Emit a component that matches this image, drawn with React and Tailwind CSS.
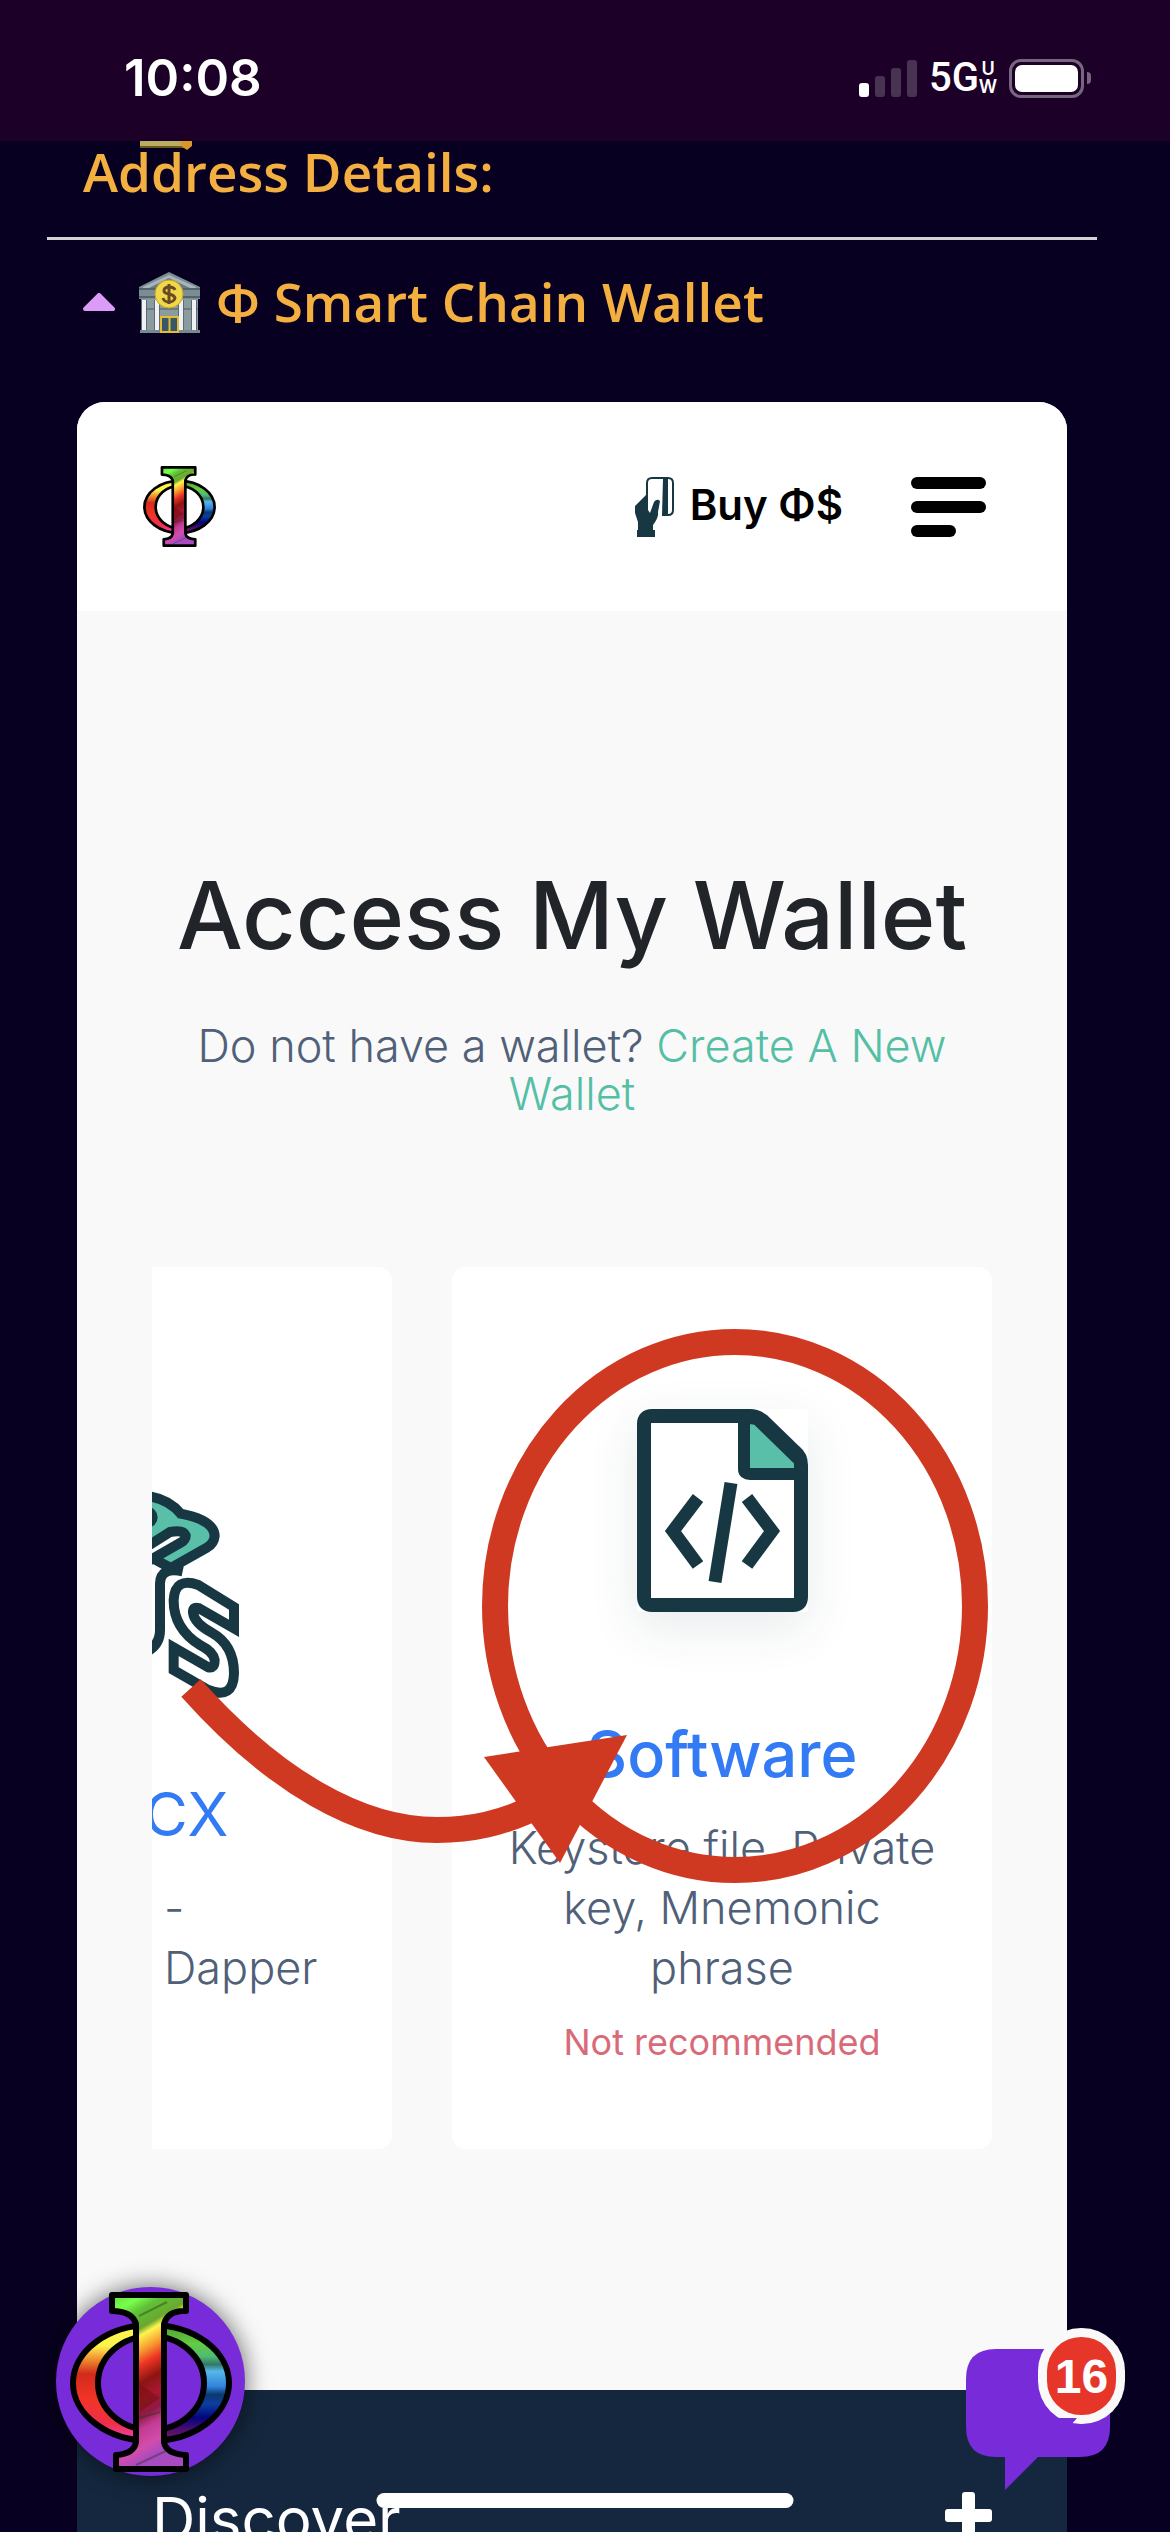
import React from "react";

const PhiLogo = ({ id, className }) => (
  <svg viewBox="0 0 162 180" className={className} role="img" aria-label="Phi logo">
    <defs>
      <linearGradient id={id + "stem"} x1="0" y1="0" x2="0.25" y2="1">
        <stop offset="0" stopColor="#63dd3d" />
        <stop offset="0.1" stopColor="#78ff4c" />
        <stop offset="0.17" stopColor="#60c038" />
        <stop offset="0.27" stopColor="#6aa82f" />
        <stop offset="0.31" stopColor="#fff44f" />
        <stop offset="0.4" stopColor="#f6932f" />
        <stop offset="0.47" stopColor="#ee3524" />
        <stop offset="0.57" stopColor="#8d1412" />
        <stop offset="0.66" stopColor="#a81830" />
        <stop offset="0.75" stopColor="#8e1a45" />
        <stop offset="0.82" stopColor="#c23a92" />
        <stop offset="0.92" stopColor="#d24dab" />
        <stop offset="1" stopColor="#a84ac0" />
      </linearGradient>
      <linearGradient id={id + "left"} x1="0.6" y1="0" x2="0.6" y2="1">
        <stop offset="0" stopColor="#fff352" />
        <stop offset="0.18" stopColor="#fdf34d" />
        <stop offset="0.28" stopColor="#f29a33" />
        <stop offset="0.42" stopColor="#d22b1c" />
        <stop offset="0.65" stopColor="#f23428" />
        <stop offset="0.85" stopColor="#ee2f48" />
        <stop offset="1" stopColor="#ee45b5" />
      </linearGradient>
      <linearGradient id={id + "right"} x1="0.4" y1="0" x2="0.4" y2="1">
        <stop offset="0" stopColor="#4f9f30" />
        <stop offset="0.16" stopColor="#62cc43" />
        <stop offset="0.27" stopColor="#4fbb72" />
        <stop offset="0.34" stopColor="#33776a" />
        <stop offset="0.4" stopColor="#55b8e8" />
        <stop offset="0.53" stopColor="#3182dc" />
        <stop offset="0.6" stopColor="#0b3870" />
        <stop offset="0.68" stopColor="#0b3fa0" />
        <stop offset="0.8" stopColor="#04047c" />
        <stop offset="0.9" stopColor="#4b0c70" />
        <stop offset="1" stopColor="#7d1b62" />
      </linearGradient>
    </defs>
    <path d="M81 33A78 58 0 0 0 81 149V138A53 47 0 0 1 81 44z" fill={`url(#${id}left)`} stroke="#000" strokeWidth="6" />
    <path d="M81 33A78 58 0 0 1 81 149V138A53 47 0 0 0 81 44z" fill={`url(#${id}right)`} stroke="#000" strokeWidth="6" />
    <path
      d="M42 3H116V19Q98 18 94 32V45V142V150Q96 162 116 163V177H46V163Q64 162 66 150V32Q62 19 42 19Z"
      fill={`url(#${id}stem)`}
      stroke="#000"
      strokeWidth="6"
      strokeLinejoin="round"
    />
    <path d="M70 92l20 14-20 14zM70 61l18 18" fill="#761010" opacity="0.6" />
    <path d="M69 24l28-14M70 126l20-6M66 173l30-14" stroke="#1d3a10" strokeWidth="2" opacity="0.4" />
  </svg>
);

const BankIcon = () => (
  <svg viewBox="0 0 61 61" className="h-[61px] w-[61px] shrink-0" aria-hidden="true">
    <path d="M0 15L30 0l31 15v12H0z" fill="#7b8d92" />
    <path d="M4 15L30 3l27 12v3H4z" fill="#a7b6ba" />
    <path d="M10 16L30 6l21 10z" fill="#697b81" />
    <path d="M0 17h61M0 25h61" stroke="#52656c" strokeWidth="2" />
    <path d="M2 27h57v31H2z" fill="#8b9ca0" />
    <path d="M2 37h57" stroke="#6a7c82" strokeWidth="2" />
    <path d="M5 28v31M18 28v31M42 28v31M55 28v31" stroke="#5b6b72" strokeWidth="6" />
    <path d="M5 28v31M18 28v31M42 28v31M55 28v31" stroke="#f1f1f5" strokeWidth="4" />
    <path d="M1 58h60v3H1z" fill="#77898f" />
    <path d="M22 45h17v15H22z" fill="#365868" stroke="#e3bd35" strokeWidth="2" />
    <path d="M30.500 45v15" stroke="#e3bd35" strokeWidth="2" />
    <circle cx="30" cy="22" r="14" fill="#f0d84b" stroke="#c99f24" />
    <path d="M36 18Q35 15 30 15T25 19Q25 21 30 22T36 26Q35 30 30 30T24 26M30 12v20" fill="none" stroke="#6a4b24" strokeWidth="3" />
  </svg>
);

const HandCard = () => (
  <svg viewBox="0 0 39 60" className="h-[60px] w-[39px]" aria-hidden="true">
    <path d="M12 32V6q0-5 5-5h16q5 0 5 5v27q0 5-5 5h-6" fill="#fff" stroke="#173843" strokeWidth="2" />
    <path d="M28 2h5v36h-6z" fill="#173843" />
    <path d="M11 18L0 29v7l3 9v8H2v7h18v-7h-2v-5q6-8 5-13l2-11q-3-3-6 1l-4 11-2-3z" fill="#173843" />
  </svg>
);

const DappsIcon = () => (
  <svg viewBox="36 60 270 630" className="block h-[210px] w-[90px]" fill="none" stroke="#173843" strokeWidth="30" aria-hidden="true">
    <path d="M20 78Q85 85 122 131Q222 150 224 198Q222 220 202 232L92 294L20 255z" fill="#59bfa9" />
    <path d="M20 230L90 186Q130 178 137 196Q138 208 122 218L20 276" fill="#fff" />
    <circle cx="22" cy="142" r="16" fill="#173843" />
    <path d="M128 304Q62 290 60 340V480Q60 525 20 545" />
    <path
      d="M282 411V475L175 414Q158 409 159 428Q163 460 215 488Q282 525 282 610Q280 690 205 660L101 600V532L205 592Q224 597 224 570Q220 545 180 525Q100 475 101 390Q105 320 175 345z"
      fill="#fff"
    />
  </svg>
);

const CodeFile = () => (
  <svg viewBox="0 0 171 203" className="block h-[203px] w-[171px]" fill="none" stroke="#173843" aria-hidden="true">
    <path d="M15 7H113Q120 7 126 12L158 43Q164 48 164 56V188Q164 196 156 196H15Q7 196 7 188V15Q7 7 15 7z" fill="#fff" strokeWidth="14" />
    <path d="M107 8V60Q107 65 113 65H163V52L120 10z" fill="#59bfa9" strokeWidth="12" />
    <path d="M61 89L36 122L61 156M110 89L135 122L110 156M94 74L78 173" strokeWidth="13" />
  </svg>
);

export default function App() {
  return (
    <div className="relative flex h-screen flex-col overflow-hidden bg-[#080020] font-['Inter',sans-serif]">
      <header className="flex h-[141px] shrink-0 items-start justify-between bg-[#1c0028] pl-[124px] pr-[79px] pt-[46px] text-white">
        <time className="text-[51px] font-semibold leading-[64px]">10:08</time>
        <div className="flex h-[64px] items-center">
          <div className="flex h-[38px] items-end gap-[6px]" aria-label="Signal">
            <i className="h-[14px] w-[10px] rounded-[3px] bg-white" />
            <i className="h-[21px] w-[10px] rounded-[3px] bg-white/20" />
            <i className="h-[29px] w-[10px] rounded-[3px] bg-white/20" />
            <i className="h-[37px] w-[10px] rounded-[3px] bg-white/20" />
          </div>
          <span className="ml-3 font-['Roboto',sans-serif] text-[40px] font-medium leading-[40px]">5G</span>
          <span className="flex w-[18px] flex-col items-center text-[18px] font-semibold leading-[18px]">
            <span>U</span>
            <span>W</span>
          </span>
          <div className="ml-3 h-[39px] w-[75px] rounded-[12px] border-3 border-white/40 p-[3px]">
            <div className="h-full w-full rounded-[7px] bg-white" />
          </div>
          <i className="ml-[3px] h-[12px] w-1 rounded-r-full bg-white/40" />
        </div>
      </header>

      <section className="h-[261px] shrink-0 pl-[47px] pr-[73px] font-['Open_Sans',sans-serif] text-[#f4af41]">
        <div className="relative h-[96px] px-9">
          <svg viewBox="0 0 52 9" className="absolute left-[93px] top-0 h-[9px] w-[52px]" aria-hidden="true">
            <path d="M0 0h45v6H0z" fill="#b9ad62" />
            <path d="M0 5h45v2H0z" fill="#6b5a20" />
            <path d="M41 0h11v5l-5 4-6-4z" fill="#d9962b" />
          </svg>
          <h2 className="text-[53px] font-semibold leading-[62px]">Address Details:</h2>
        </div>
        <hr className="h-[3px] border-0 bg-[#d3d3d3]" />
        <button className="mt-[30px] flex h-[64px] w-full items-center px-9 text-left">
          <svg viewBox="0 0 32 18" className="h-[18px] w-[32px]" aria-hidden="true">
            <path d="M16 2L30 16H2z" fill="#dc9bf6" stroke="#dc9bf6" strokeWidth="4" strokeLinejoin="round" />
          </svg>
          <span className="ml-6 flex">
            <BankIcon />
          </span>
          <span className="ml-4 text-[53px] font-semibold leading-[62px]">Φ Smart Chain Wallet</span>
        </button>
      </section>

      <main className="ml-[77px] mr-[103px] flex flex-1 flex-col rounded-t-[28px] bg-[#f9f9f9]">
        <nav className="flex h-[209px] shrink-0 items-center rounded-t-[28px] bg-white pl-[66px] pr-[81px]">
          <a href="#home" className="block">
            <PhiLogo id="nav" className="h-[81px] w-[73px]" />
          </a>
          <a href="#buy" className="ml-auto flex items-center text-[42px] font-semibold leading-[60px] text-black">
            <HandCard />
            <span className="ml-4 pb-1">Buy Φ$</span>
          </a>
          <button aria-label="Menu" className="ml-[68px] flex w-[75px] flex-col gap-3">
            <i className="h-3 w-full rounded-full bg-black" />
            <i className="h-3 w-full rounded-full bg-black" />
            <i className="h-3 w-[45px] rounded-full bg-black" />
          </button>
        </nav>

        <div className="shrink-0 px-[75px] pt-[250px] text-center">
          <h1 className="whitespace-nowrap text-[93px] font-medium leading-[108px] text-[#212529]">Access My Wallet</h1>
          <p className="mt-[53px] whitespace-nowrap text-[45px] font-light leading-[48px] text-[#506078]">
            Do not have a wallet?{" "}
            <a href="#create" className="text-[#55bfa6]">Create A New<br />Wallet</a>
          </p>
        </div>

        <div className="relative mx-[75px] mt-[149px] shrink-0">
          <div className="flex gap-[60px] overflow-hidden">
            <article className="h-[882px] w-[240px] shrink-0 overflow-hidden rounded-r-[14px] bg-white pt-[223px]">
              <DappsIcon />
              <h3 className="-ml-2 mt-[78px] text-[60px] font-normal leading-[72px] text-[#337af5]">CX</h3>
              <p className="mt-7 pl-3 text-[45px] font-light leading-[60px] text-[#506078]">-<br />Dapper</p>
            </article>
            <article className="flex h-[882px] flex-1 flex-col items-center rounded-[14px] bg-white pt-[142px] text-center">
              <div className="rounded-sm shadow-[0_15px_50px_rgba(23,56,67,0.1)]">
                <CodeFile />
              </div>
              <h3 className="mt-[106px] text-[63px] font-medium leading-[72px] text-[#337af5]">Software</h3>
              <p className="mt-7 text-[45px] font-light leading-[60px] text-[#506078]">
                Keystore file, Private<br />key, Mnemonic<br />phrase
              </p>
              <p className="mt-5 text-[36px] leading-[48px] text-[#d96a78]">Not recommended</p>
            </article>
          </div>
          <svg viewBox="0 0 840 882" className="pointer-events-none absolute inset-0 h-full w-full" fill="none" stroke="#d03921" strokeWidth="26" aria-hidden="true">
            <ellipse cx="583" cy="339" rx="240" ry="264" />
            <path d="M39 421C123 515 208 563 285 563C318 563 350 557 388 538" />
            <path d="M475 468L332 490L408 596z" fill="#d03921" stroke="none" />
          </svg>
        </div>

        <footer className="mt-[241px] flex h-[250px] shrink-0 items-start justify-between bg-[#14273e] px-[75px] pt-[93px] text-white">
          <h4 className="text-[60px] font-normal leading-[72px]">Discover</h4>
          <button aria-label="Expand Discover" className="mt-[9px]">
            <svg viewBox="0 0 47 47" className="block h-[47px] w-[47px]" fill="#fff">
              <rect x="17" width="13" height="47" rx="3" />
              <rect y="17" width="47" height="13" rx="3" />
            </svg>
          </button>
        </footer>
      </main>

      <button aria-label="Phi menu" className="absolute bottom-[56px] left-[56px] flex h-[189px] w-[189px] items-center justify-center rounded-full bg-[#772bd9] shadow-[0_0_24px_rgba(0,0,0,0.6)]">
        <PhiLogo id="fab" className="h-[180px] w-[162px]" />
      </button>

      <button aria-label="Messages, 16 unread" className="absolute bottom-[42px] right-[45px] h-[162px] w-[159px]">
        <svg viewBox="0 0 159 162" className="h-full w-full" aria-hidden="true">
          <path d="M30 21H114Q144 21 144 51V99Q144 129 114 129H72L39 162V129H30Q0 129 0 99V51Q0 21 30 21z" fill="#772bd9" />
          <rect x="72" width="87" height="96" rx="43" fill="#f9f9f9" />
          <path d="M90 90H111L105 97H90z" fill="#772bd9" />
          <rect x="81" y="9" width="69" height="78" rx="34" fill="#e63629" />
        </svg>
        <span className="absolute right-[9px] top-[9px] w-[69px] text-center font-['Liberation_Sans',sans-serif] text-[48px] font-bold leading-[80px] text-white">16</span>
      </button>

      <div className="absolute bottom-6 left-1/2 h-[15px] w-[417px] -translate-x-1/2 rounded-full bg-white" />
    </div>
  );
}
